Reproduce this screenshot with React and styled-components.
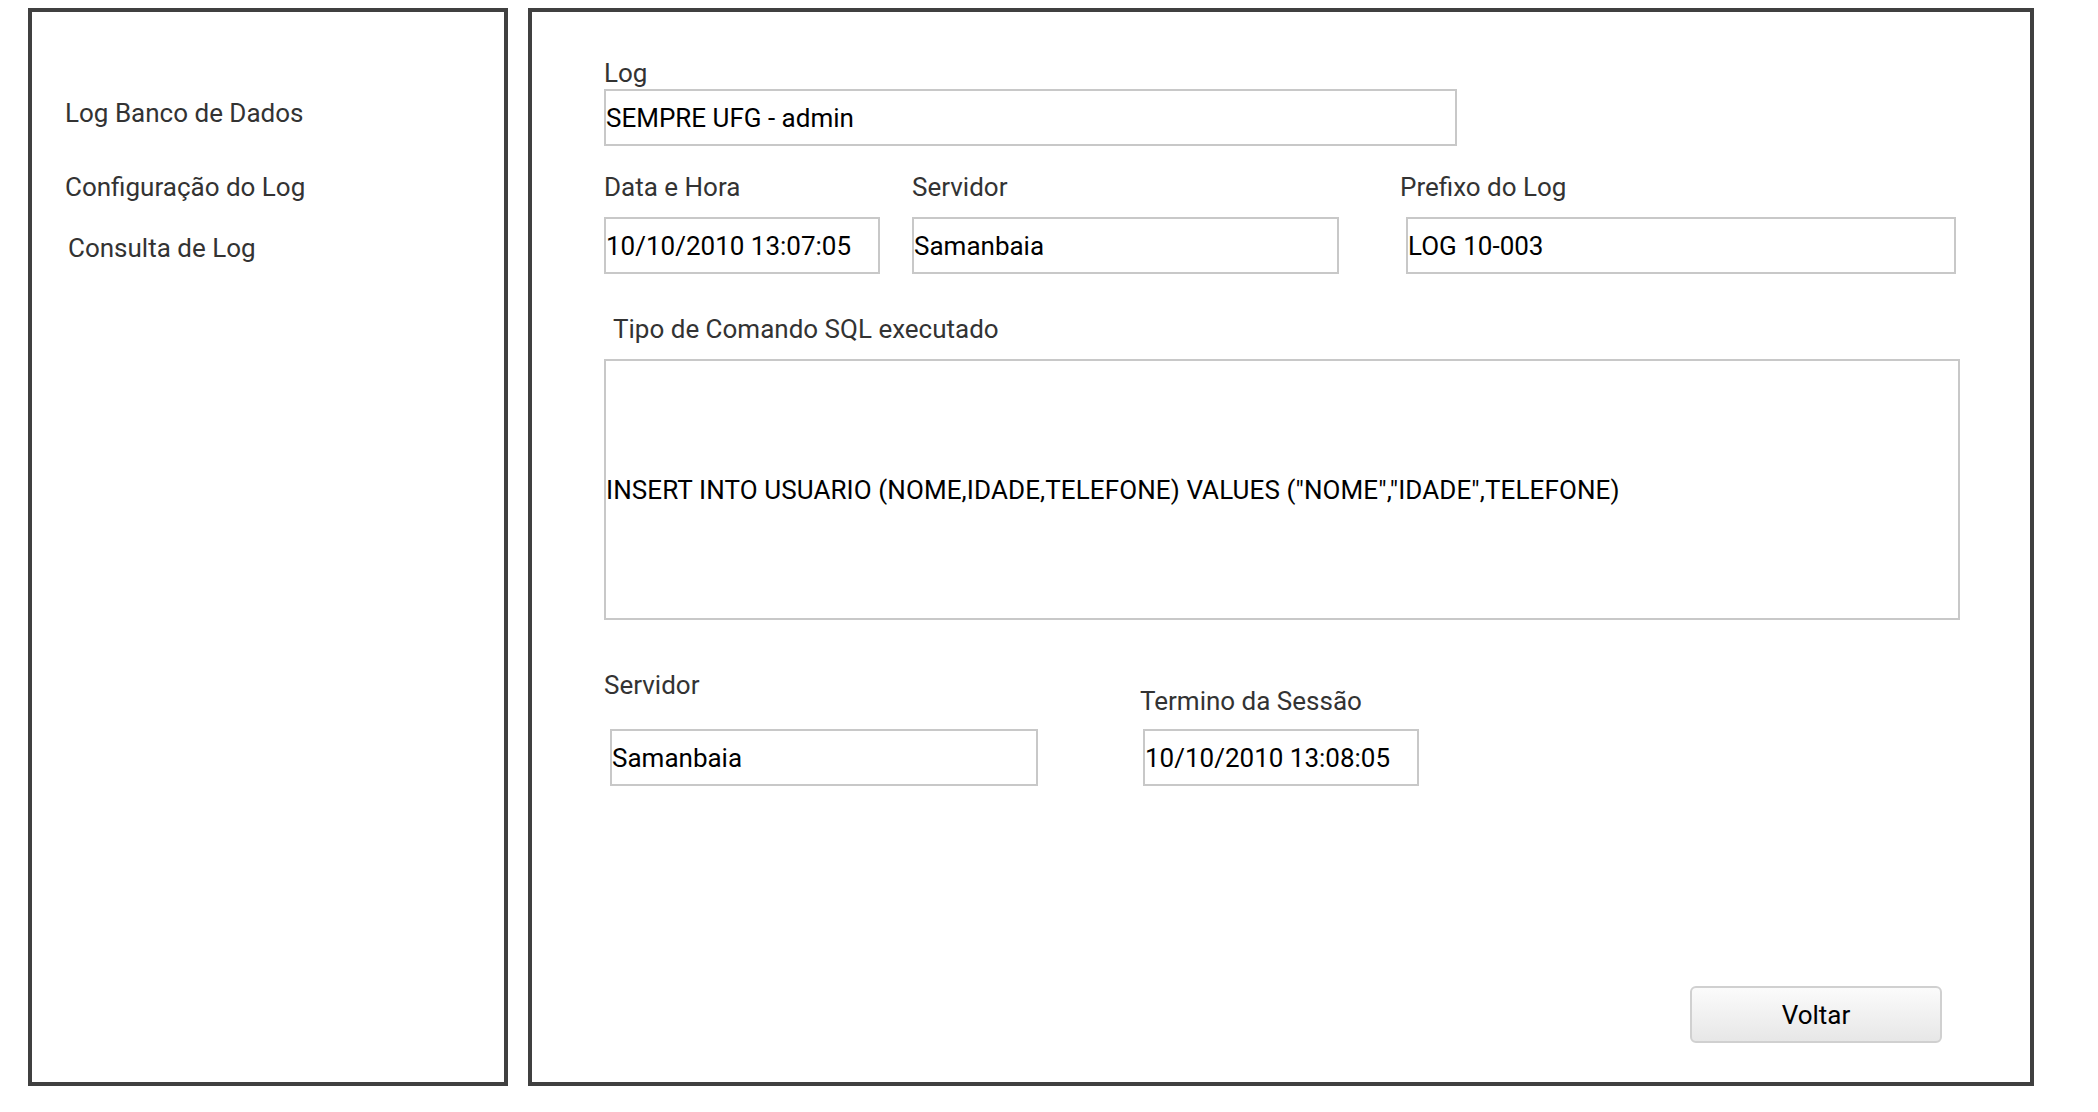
import React from "react";
import styled, { createGlobalStyle } from "styled-components";

const GlobalStyle = createGlobalStyle`
  html, body {
    margin: 0;
    padding: 0;
    background: #fff;
  }
  body {
    font-family: Roboto, "Liberation Sans", Arial, sans-serif;
  }
`;

const Page = styled.div`
  display: flex;
  gap: 20px;
  padding: 8px 0 0 28px;
`;

const Sidebar = styled.nav`
  box-sizing: border-box;
  width: 480px;
  height: 1078px;
  border: 4px solid #404040;
  padding: 86px 0 0 33px;
  display: flex;
  flex-direction: column;
`;

const NavItem = styled.a`
  font-size: 26px;
  line-height: 30px;
  color: #333;
  text-decoration: none;
  margin-top: ${(p) => p.$top || 0}px;
  margin-left: ${(p) => p.$indent || 0}px;
  cursor: pointer;
`;

const Main = styled.main`
  box-sizing: border-box;
  width: 1506px;
  height: 1078px;
  border: 4px solid #404040;
  padding: 46px 88px 39px 72px;
  display: flex;
  flex-direction: column;
`;

const Row = styled.div`
  display: flex;
  align-items: ${(p) => p.$align || "flex-start"};
  margin-top: ${(p) => p.$top || 0}px;
`;

const Field = styled.div`
  display: flex;
  flex-direction: column;
  width: ${(p) => p.$width}px;
  margin-left: ${(p) => p.$left || 0}px;
  margin-top: ${(p) => p.$top || 0}px;
`;

const Label = styled.label`
  font-size: 26px;
  line-height: 30px;
  color: #333;
  margin-left: ${(p) => p.$indent || 0}px;
  margin-bottom: ${(p) => p.$gap || 0}px;
`;

const TextBox = styled.input`
  box-sizing: border-box;
  width: ${(p) => p.$width}px;
  height: 57px;
  margin: 0 0 0 ${(p) => p.$indent || 0}px;
  padding: 0;
  border: 2px solid #c8c8c8;
  border-radius: 0;
  background: #fff;
  font-family: Roboto, "Liberation Sans", Arial, sans-serif;
  font-size: 26px;
  color: #000;
  outline: none;
`;

const SqlBox = styled.div`
  box-sizing: border-box;
  width: 1356px;
  height: 261px;
  border: 2px solid #c8c8c8;
  display: flex;
  align-items: center;
  font-size: 26px;
  line-height: 30px;
  letter-spacing: 0.1px;
  color: #000;
  white-space: nowrap;
`;

const Footer = styled.div`
  margin-top: auto;
  display: flex;
  justify-content: flex-end;
`;

const Button = styled.button`
  box-sizing: border-box;
  width: 252px;
  height: 57px;
  border: 2px solid #d0d0d0;
  border-radius: 6px;
  background: linear-gradient(#fbfbfb, #e7e7e7);
  font-family: Roboto, "Liberation Sans", Arial, sans-serif;
  font-size: 26px;
  color: #000;
  cursor: pointer;
`;

export default function App() {
  return (
    <>
      <GlobalStyle />
      <Page>
        <Sidebar>
          <NavItem>Log Banco de Dados</NavItem>
          <NavItem $top={44}>Configuração do Log</NavItem>
          <NavItem $top={31} $indent={3}>
            Consulta de Log
          </NavItem>
        </Sidebar>

        <Main>
          <Field $width={853}>
            <Label $gap={1}>Log</Label>
            <TextBox $width={853} readOnly defaultValue="SEMPRE UFG - admin" />
          </Field>

          <Row $top={26}>
            <Field $width={276}>
              <Label $gap={15}>Data e Hora</Label>
              <TextBox $width={276} readOnly defaultValue="10/10/2010 13:07:05" />
            </Field>
            <Field $width={427} $left={32}>
              <Label $gap={15}>Servidor</Label>
              <TextBox $width={427} readOnly defaultValue="Samanbaia" />
            </Field>
            <Field $width={556} $left={61}>
              <Label $gap={15}>Prefixo do Log</Label>
              <TextBox $width={550} $indent={6} readOnly defaultValue="LOG 10-003" />
            </Field>
          </Row>

          <Field $width={1356} $top={40}>
            <Label $gap={15} $indent={9}>
              Tipo de Comando SQL executado
            </Label>
            <SqlBox>
              INSERT INTO USUARIO (NOME,IDADE,TELEFONE) VALUES ("NOME","IDADE",TELEFONE)
            </SqlBox>
          </Field>

          <Row $top={50} $align="flex-end">
            <Field $width={434}>
              <Label $gap={29}>Servidor</Label>
              <TextBox $width={428} $indent={6} readOnly defaultValue="Samanbaia" />
            </Field>
            <Field $width={282} $left={102}>
              <Label $gap={13}>Termino da Sessão</Label>
              <TextBox $width={276} $indent={3} readOnly defaultValue="10/10/2010 13:08:05" />
            </Field>
          </Row>

          <Footer>
            <Button>Voltar</Button>
          </Footer>
        </Main>
      </Page>
    </>
  );
}
